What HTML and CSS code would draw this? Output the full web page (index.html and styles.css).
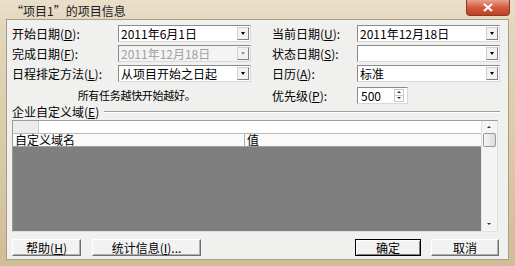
FILE: index.html
```html
<!DOCTYPE html>
<html lang="zh-CN">
<head>
  <meta charset="UTF-8">
  <title>项目信息</title>
  <link rel="stylesheet" href="styles.css">
</head>
<body>
  <div class="window">
    <!-- Title bar -->
    <div class="titlebar">
      <span class="title">“项目1”的项目信息</span>
      <span class="close-btn">
        <svg width="12" height="9" viewBox="0 0 12 9"><path d="M2 1 L10 8 M10 1 L2 8" stroke="#fff" stroke-width="2.2"/></svg>
      </span>
    </div>

    <div class="client">
      <!-- Date / schedule fields -->
      <div class="form-grid">
        <label class="lbl">开始日期(<u>D</u>):</label>
        <div class="combo"><span class="val">2011年6月1日</span><span class="drop"></span></div>
        <label class="lbl">当前日期(<u>U</u>):</label>
        <div class="combo"><span class="val">2011年12月18日</span><span class="drop"></span></div>

        <label class="lbl">完成日期(<u>F</u>):</label>
        <div class="combo disabled"><span class="val">2011年12月18日</span><span class="drop"></span></div>
        <label class="lbl">状态日期(<u>S</u>):</label>
        <div class="combo"><span class="val"></span><span class="drop"></span></div>

        <label class="lbl">日程排定方法(<u>L</u>):</label>
        <div class="combo"><span class="val">从项目开始之日起</span><span class="drop"></span></div>
        <label class="lbl">日历(<u>A</u>):</label>
        <div class="combo"><span class="val">标准</span><span class="drop"></span></div>

        <span class="hint">所有任务越快开始越好。</span>
        <label class="lbl">优先级(<u>P</u>):</label>
        <div class="spin"><span class="val">500</span><span class="spin-btns"><i class="up"></i><i class="down"></i></span></div>
      </div>

      <!-- Enterprise custom fields -->
      <div class="group-head">
        <span>企业自定义域(<u>E</u>)</span>
        <span class="rule"></span>
      </div>

      <div class="table">
        <div class="table-main">
          <div class="edit-row"><span class="corner"></span><span class="edit"></span></div>
          <div class="head-row">
            <span class="col-name">自定义域名</span>
            <span class="col-val">值</span>
          </div>
          <div class="body"></div>
        </div>
        <div class="vscroll">
          <span class="arrow up"></span>
          <span class="thumb"></span>
          <span class="track"></span>
          <span class="arrow down"></span>
        </div>
      </div>

      <!-- Buttons -->
      <div class="buttons">
        <button class="btn btn-help">帮助(<u>H</u>)</button>
        <button class="btn btn-stats">统计信息(<u>I</u>)...</button>
        <span class="spacer"></span>
        <button class="btn btn-ok">确定</button>
        <button class="btn btn-cancel">取消</button>
      </div>
    </div>
  </div>
</body>
</html>
```

FILE: styles.css
```css
html, body {
  margin: 0;
  padding: 0;
  width: 515px;
  height: 266px;
  overflow: hidden;
  font-family: "Noto Sans CJK SC", "DejaVu Sans", sans-serif;
  font-size: 12px;
  color: #000;
}
u {
  text-decoration: underline;
}
/* Outer frame (basic theme, tan glass) */
.window {
  width: 515px;
  height: 266px;
  box-sizing: border-box;
  padding: 0 6px 6px 6px;
  background: linear-gradient(180deg, #e9dfca 0%, #e3d6bb 10%, #d9c9a6 60%, #cfbd97 100%);
  display: flex;
  flex-direction: column;
}
.titlebar {
  height: 19px;
  display: flex;
  align-items: center;
  justify-content: space-between;
  flex-shrink: 0;
}
.title {
  padding-left: 5px;
  padding-top: 1px;
  font-size: 12px;
  color: #1a1a1a;
}
.close-btn {
  width: 42px;
  height: 15px;
  margin-top: -4px;
  margin-right: -1px;
  display: flex;
  align-items: center;
  justify-content: center;
  border: 1px solid #8a3a2a;
  border-top: none;
  border-radius: 0 0 4px 4px;
  background: linear-gradient(180deg, #e8a08c 0%, #d45a3e 50%, #c0401f 100%);
}
/* Client area */
.client {
  flex: 1;
  background: #f0f0ee;
  border: 1px solid #a99d86;
  padding: 5px 8px 2px 5px;
  display: flex;
  flex-direction: column;
}
.form-grid {
  display: grid;
  grid-template-columns: 106px 133px 106px 143px;
  grid-auto-rows: 17px;
  row-gap: 3px;
  column-gap: 0;
  align-items: center;
}
.form-grid > .lbl:nth-child(4n+3),
.form-grid > .lbl.prio {
  padding-left: 21px;
}
.lbl {
  white-space: nowrap;
  line-height: 17px;
}
.combo {
  height: 17px;
  box-sizing: border-box;
  border: 1px solid #8a8a8a;
  border-right-color: #d8d8d8;
  border-bottom-color: #d8d8d8;
  background: #fff;
  display: flex;
  align-items: center;
}
.combo .val {
  flex: 1;
  padding-left: 2px;
  line-height: 15px;
  white-space: nowrap;
  overflow: hidden;
}
.combo.disabled {
  background: #f4f4f4;
}
.combo.disabled .val {
  color: #a0a0a0;
}
.drop {
  width: 12px;
  height: 13px;
  margin-right: 1px;
  box-sizing: border-box;
  border: 1px solid #d0d0d0;
  border-right-color: #808080;
  border-bottom-color: #808080;
  background: #f2f2f2;
  position: relative;
}
.drop::after {
  content: "";
  position: absolute;
  left: 3px;
  top: 4px;
  border-left: 2px solid transparent;
  border-right: 2px solid transparent;
  border-top: 3px solid #000;
}
.combo.disabled .drop::after {
  border-top-color: #999;
}
/* Last row: hint + priority spinner */
.hint {
  grid-column: 1 / 3;
  padding-left: 10px;
  text-align: center;
  white-space: nowrap;
  font-size: 11px;
  letter-spacing: -0.3px;
  line-height: 17px;
}
.form-grid > *:nth-last-child(-n+3) {
  margin-top: 4px;
}
.form-grid > .hint + .lbl {
  padding-left: 21px;
}
.spin {
  width: 51px;
  height: 17px;
  box-sizing: border-box;
  border: 1px solid #8a8a8a;
  border-right-color: #d8d8d8;
  border-bottom-color: #d8d8d8;
  background: #fff;
  display: flex;
  align-items: center;
}
.spin .val {
  flex: 1;
  padding-left: 3px;
  line-height: 15px;
}
.spin-btns {
  width: 10px;
  height: 13px;
  margin-right: 3px;
  display: flex;
  flex-direction: column;
  border: 1px solid #c8c8c8;
  box-sizing: border-box;
}
.spin-btns i {
  flex: 1;
  position: relative;
}
.spin-btns i.up {
  border-bottom: 1px solid #c8c8c8;
}
.spin-btns i.up::after,
.spin-btns i.down::after {
  content: "";
  position: absolute;
  left: 2px;
  border-left: 2px solid transparent;
  border-right: 2px solid transparent;
}
.spin-btns i.up::after {
  top: 1px;
  border-bottom: 2px solid #333;
}
.spin-btns i.down::after {
  top: 1px;
  border-top: 2px solid #333;
}
/* Group heading with rule */
.group-head {
  display: flex;
  align-items: center;
  height: 16px;
  margin-top: 1px;
  white-space: nowrap;
}
.group-head .rule {
  flex: 1;
  height: 0;
  border-top: 1px solid #a0a0a0;
  border-bottom: 1px solid #fff;
  margin-left: 5px;
  margin-top: 1px;
}
/* Custom field table */
.table {
  margin-top: 1px;
  height: 110px;
  margin-right: 2px;
  border: 1px solid #9c9c9c;
  border-right-color: #e0e0e0;
  border-bottom-color: #e0e0e0;
  display: flex;
  background: #fff;
}
.table-main {
  flex: 1;
  display: flex;
  flex-direction: column;
}
.edit-row {
  height: 12px;
  display: flex;
  border-bottom: 1px solid #b8b8b8;
}
.corner {
  width: 25px;
  background: #ececec;
  border-right: 1px solid #c8c8c8;
}
.edit {
  flex: 1;
  background: #fff;
}
.head-row {
  height: 12px;
  display: flex;
  background: #fafafa;
  border-bottom: 1px solid #a0a0a0;
  line-height: 12px;
}
.col-name {
  width: 229px;
  padding-left: 2px;
  border-right: 1px solid #b0b0b0;
}
.col-val {
  padding-left: 2px;
}
.body {
  flex: 1;
  background: #7f7f7f;
}
.vscroll {
  width: 15px;
  display: flex;
  flex-direction: column;
  background: #f4f4f4;
  border-left: 1px solid #e4e4e4;
}
.vscroll .arrow {
  height: 12px;
  position: relative;
}
.vscroll .arrow::after {
  content: "";
  position: absolute;
  left: 5px;
  border-left: 2px solid transparent;
  border-right: 2px solid transparent;
}
.vscroll .arrow.up::after {
  top: 5px;
  border-bottom: 2px solid #333;
}
.vscroll .arrow.down::after {
  top: 4px;
  border-top: 2px solid #333;
}
.vscroll .thumb {
  height: 12px;
  margin: 0 1px;
  border: 1px solid #9a9a9a;
  border-radius: 2px;
  background: linear-gradient(90deg, #f6f6f6, #dcdcdc);
}
.vscroll .track {
  flex: 1;
}
/* Dialog buttons */
.buttons {
  display: flex;
  align-items: center;
  margin-top: 7px;
  gap: 10px;
}
.spacer {
  flex: 1;
}
.btn {
  height: 17px;
  font-family: inherit;
  font-size: 12px;
  padding: 0;
  background: #f2f2f2;
  border: 1px solid #fff;
  border-right-color: #707070;
  border-bottom-color: #707070;
  box-shadow: inset -1px -1px 0 #b0b0b0;
  line-height: 13px;
}
.btn-help { width: 69px; }
.btn-stats { width: 109px; margin-left: 1px; }
.btn-ok {
  width: 66px;
  border: 1px solid #000;
  box-shadow: inset 1px 1px 0 #fff, inset -1px -1px 0 #808080;
}
.btn-cancel { width: 68px; margin-right: 1px; }
```
